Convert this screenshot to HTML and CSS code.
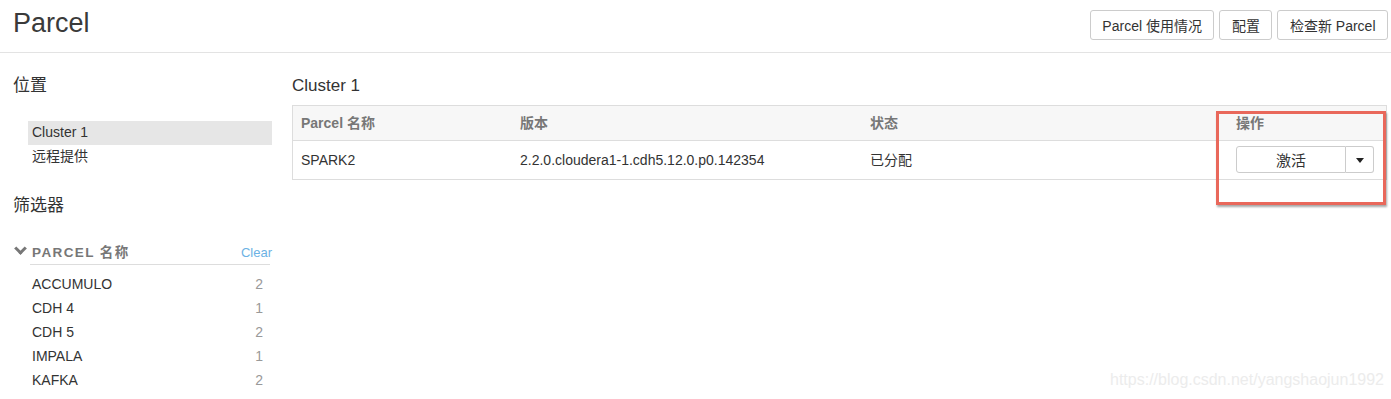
FILE: index.html
```html
<!DOCTYPE html>
<html lang="zh-CN">
<head>
    <meta charset="UTF-8">
    <title>Parcel</title>
    <link rel="stylesheet" href="styles.css">
</head>
<body>
    <div class="page-header">
        <h1>Parcel</h1>
        <div class="header-btns">
            <button class="btn">Parcel 使用情况</button>
            <button class="btn">配置</button>
            <button class="btn">检查新 Parcel</button>
        </div>
    </div>

    <div class="content">
        <!-- 左侧栏 -->
        <div class="sidebar">
            <h3>位置</h3>
            <ul class="nav-list">
                <li class="active">Cluster 1</li>
                <li>远程提供</li>
            </ul>

            <h3 class="filter-title">筛选器</h3>
            <div class="facet-head">
                <span class="facet-name"><span class="chevron"></span>PARCEL 名称</span>
                <a class="clear-link">Clear</a>
            </div>
            <ul class="facet-list">
                <li><span>ACCUMULO</span><span class="count">2</span></li>
                <li><span>CDH 4</span><span class="count">1</span></li>
                <li><span>CDH 5</span><span class="count">2</span></li>
                <li><span>IMPALA</span><span class="count">1</span></li>
                <li><span>KAFKA</span><span class="count">2</span></li>
            </ul>
        </div>

        <!-- 主区域 -->
        <div class="main">
            <h3>Cluster 1</h3>
            <table class="parcel-table">
                <thead>
                    <tr>
                        <th class="col-name">Parcel 名称</th>
                        <th class="col-ver">版本</th>
                        <th class="col-state">状态</th>
                        <th class="col-op">操作</th>
                    </tr>
                </thead>
                <tbody>
                    <tr>
                        <td>SPARK2</td>
                        <td>2.2.0.cloudera1-1.cdh5.12.0.p0.142354</td>
                        <td>已分配</td>
                        <td>
                            <div class="split-btn">
                                <button class="split-main">激活</button>
                                <button class="split-caret"><span class="caret"></span></button>
                            </div>
                        </td>
                    </tr>
                </tbody>
            </table>
        </div>
    </div>

    <div class="mark-box"></div>
    <div class="watermark">https://blog.csdn.net/yangshaojun1992</div>
</body>
</html>
```

FILE: styles.css
```css
body {
    margin: 0;
    font-family: "Liberation Sans", "Noto Sans CJK SC", sans-serif;
    font-size: 14px;
    color: #333;
    background: #fff;
}
.page-header {
    height: 52px;
    display: flex;
    justify-content: space-between;
    align-items: flex-start;
    border-bottom: 1px solid #e3e3e3;
    padding: 0 3px 0 13px;
}
.page-header h1 {
    margin: 0;
    font-size: 27px;
    font-weight: normal;
    line-height: 46px;
    color: #3a3a3a;
}
.header-btns {
    display: flex;
    gap: 5px;
    margin-top: 10px;
}
.btn {
    height: 30px;
    padding: 0 11.5px;
    font-family: inherit;
    font-size: 14px;
    color: #333;
    background: #fff;
    border: 1px solid #ccc;
    border-radius: 3px;
}
.content {
    display: flex;
    padding: 21px 4px 0 13px;
}
.sidebar {
    width: 259px;
    flex: none;
}
.sidebar h3, .main h3 {
    margin: 0;
    font-size: 17px;
    font-weight: normal;
    line-height: 24px;
    color: #333;
}
.nav-list {
    list-style: none;
    margin: 23px 0 0;
    padding: 0 0 0 15px;
}
.nav-list li {
    height: 24px;
    line-height: 23px;
    padding-left: 4px;
}
.nav-list li.active {
    background: #e6e6e6;
}
.filter-title {
    margin-top: 25px !important;
}
.facet-head {
    margin: 21px 0 0 0;
    display: flex;
    justify-content: space-between;
    align-items: center;
    height: 24px;
    position: relative;
}
.facet-head::after {
    content: "";
    position: absolute;
    left: 17px;
    right: 2px;
    bottom: -2px;
    border-bottom: 1px solid #ddd;
}
.facet-name {
    display: flex;
    align-items: center;
    font-size: 13.5px;
    font-weight: bold;
    letter-spacing: 1.4px;
    color: #777;
}
.chevron {
    width: 6px;
    height: 6px;
    border-right: 3px solid #777;
    border-bottom: 3px solid #777;
    transform: rotate(45deg);
    margin: -5px 7px 0 3px;
}
.clear-link {
    font-size: 13px;
    color: #6cb2e4;
    margin-top: 3px;
}
.facet-list {
    list-style: none;
    margin: 9px 0 0;
    padding: 0 9px 0 19px;
}
.facet-list li {
    display: flex;
    justify-content: space-between;
    line-height: 24px;
}
.facet-list .count {
    color: #999;
}
.main {
    flex: 1;
    margin-left: 20px;
}
.parcel-table {
    margin-top: 7px;
    width: 100%;
    border-collapse: collapse;
    border: 1px solid #ddd;
}
.parcel-table th {
    background: #f7f7f7;
    color: #777;
    font-weight: bold;
    text-align: left;
    padding: 8px 8px;
    line-height: 18px;
    border-bottom: 1px solid #ddd;
}
.parcel-table td {
    padding: 5px 8px 6px;
    line-height: 26px;
}
.col-name { width: 203px; }
.col-ver { width: 334px; }
.col-state { width: 350px; }
.split-btn {
    display: flex;
    width: 138px;
}
.split-main, .split-caret {
    height: 27px;
    font-family: inherit;
    color: #333;
    background: #fff;
    border: 1px solid #ccc;
}
.split-main {
    width: 110px;
    font-size: 15px;
    border-radius: 3px 0 0 3px;
}
.split-caret {
    width: 28px;
    border-left: none;
    border-radius: 0 3px 3px 0;
}
.caret {
    display: inline-block;
    border-left: 4px solid transparent;
    border-right: 4px solid transparent;
    border-top: 5px solid #222;
    vertical-align: middle;
}
.mark-box {
    position: absolute;
    left: 1216px;
    top: 111px;
    width: 164px;
    height: 88px;
    border: 3px solid #e9685b;
    box-shadow: 1px 2px 2px rgba(0,0,0,0.35);
}
.watermark {
    position: absolute;
    left: 1110px;
    top: 371px;
    font-size: 16px;
    color: #ececec;
}
```
